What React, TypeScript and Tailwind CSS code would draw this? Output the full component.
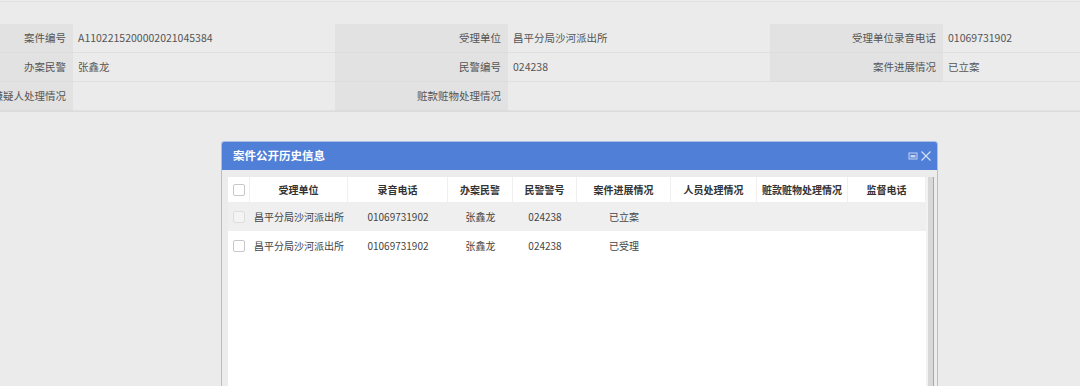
const font = { fontFamily: '"Noto Sans CJK SC", "Microsoft YaHei", sans-serif' }

function Label({ text }: { text: string }) {
    return (
        <div className="h-[29px] bg-[#e2e2e2] border-b border-[#dcdcdc] flex items-center justify-end pr-[7px] text-[#555] whitespace-nowrap overflow-hidden">
            {text}
        </div>
    )
}

function Value({ text, span }: { text?: string; span?: string }) {
    return (
        <div className={`h-[29px] bg-[#ebebeb] border-b border-[#e0e0e0] flex items-center pl-[5px] text-[#555] whitespace-nowrap ${span ?? ''}`}>
            {text}
        </div>
    )
}

function Check({ faint }: { faint?: boolean }) {
    return (
        <div className={`w-[12px] h-[12px] rounded-[2px] border ${faint ? 'border-[#dedede] bg-[#f3f3f3]' : 'border-[#c8c8c8] bg-white'}`} />
    )
}

const cols = [
    { name: '受理单位', w: 'w-[98px]' },
    { name: '录音电话', w: 'w-[100px]' },
    { name: '办案民警', w: 'w-[65px]' },
    { name: '民警警号', w: 'w-[64px]' },
    { name: '案件进展情况', w: 'w-[94px]' },
    { name: '人员处理情况', w: 'w-[86px]' },
    { name: '赃款赃物处理情况', w: 'w-[91px]' },
    { name: '监督电话', w: 'w-[78px]' },
]

const rows = [
    ['昌平分局沙河派出所', '01069731902', '张鑫龙', '024238', '已立案', '', '', ''],
    ['昌平分局沙河派出所', '01069731902', '张鑫龙', '024238', '已受理', '', '', ''],
]

export default function App() {
    return (
        <div className="relative w-[1080px] h-[386px] overflow-hidden bg-[#ebebeb] text-[10.5px]" style={font}>
            <div className="h-[2px] border-b border-[#e2e2e2]" />
            <div className="mt-[22px] ml-[-100px] w-[1305px] grid grid-cols-[173px_262px_173px_262px_173px_262px] border-b border-[#dcdcdc]">
                <Label text="案件编号" />
                <Value text="A1102215200002021045384" />
                <Label text="受理单位" />
                <Value text="昌平分局沙河派出所" />
                <Label text="受理单位录音电话" />
                <Value text="01069731902" />
                <Label text="办案民警" />
                <Value text="张鑫龙" />
                <Label text="民警编号" />
                <Value text="024238" />
                <Label text="案件进展情况" />
                <Value text="已立案" />
                <Label text="嫌疑人处理情况" />
                <Value />
                <Label text="赃款赃物处理情况" />
                <Value span="col-span-3" />
            </div>

            {/* dialog */}
            <div className="absolute left-[221px] top-[141px] w-[717px] h-[260px] rounded-t-[3px] border border-[#a9bfe9] bg-[#ececec] flex flex-col">
                <div className="h-[28px] bg-[#4f7fd6] rounded-t-[2px] flex items-center justify-between pl-[11px] pr-[5px]">
                    <span className="text-white font-bold text-[11.5px]">案件公开历史信息</span>
                    <div className="flex items-center gap-[2px]">
                        <svg width="10" height="10" viewBox="0 0 10 10">
                            <rect x="1" y="2" width="8" height="6" fill="none" stroke="#c6d5f3" strokeWidth="1" />
                            <rect x="2.5" y="4" width="5" height="2.5" fill="#c6d5f3" />
                        </svg>
                        <svg width="12" height="12" viewBox="0 0 12 12">
                            <path d="M1.5 1.5 L10.5 10.5 M10.5 1.5 L1.5 10.5" stroke="#d4e0f7" strokeWidth="1.2" />
                        </svg>
                    </div>
                </div>
                <div className="flex flex-1 pt-[7px] pl-[6px] text-[10px]">
                    <div className="w-[698px] bg-white">
                        <div className="flex h-[25px] text-[#333] font-bold">
                            <div className="w-[22px] flex items-center justify-center border-r border-[#f0f0f0]">
                                <Check />
                            </div>
                            {cols.map((c) => (
                                <div key={c.name} className={`${c.w} flex items-center justify-center border-r border-[#f0f0f0] whitespace-nowrap`}>
                                    {c.name}
                                </div>
                            ))}
                        </div>
                        {rows.map((r, i) => (
                            <div key={i} className={`flex h-[29px] text-[#444] ${i === 0 ? 'bg-[#efefef]' : 'bg-white'}`}>
                                <div className="w-[22px] flex items-center justify-center">
                                    <Check faint={i === 0} />
                                </div>
                                {r.map((v, j) => (
                                    <div key={j} className={`${cols[j].w} flex items-center whitespace-nowrap ${j === 0 ? 'pl-[4px]' : 'justify-center'}`}>
                                        {v}
                                    </div>
                                ))}
                            </div>
                        ))}
                    </div>
                    <div className="w-[2px] bg-[#f2f2f2]" />
                    <div className="w-[6px] bg-[#d8d8d8] border-r border-[#a8a8a8]" />
                </div>
            </div>
        </div>
    )
}
